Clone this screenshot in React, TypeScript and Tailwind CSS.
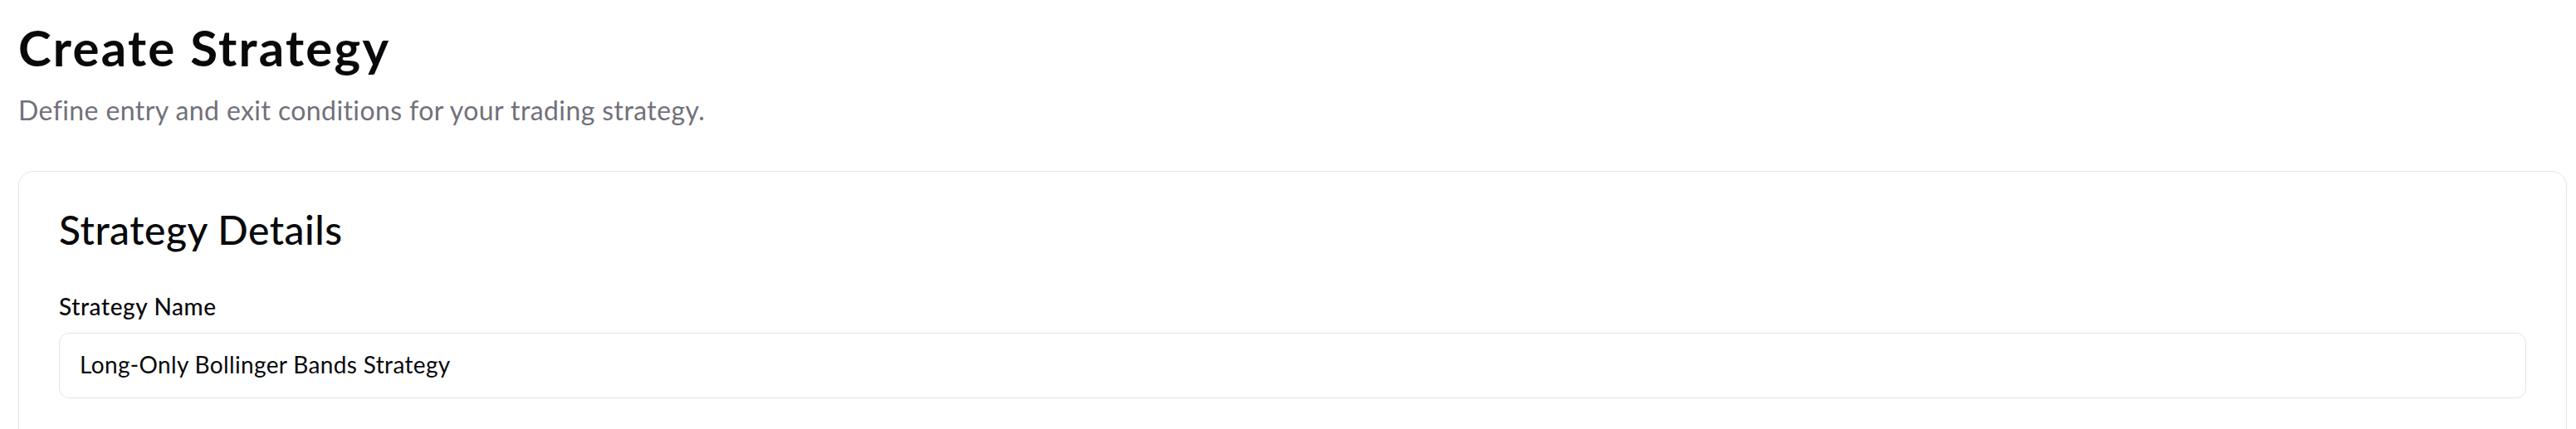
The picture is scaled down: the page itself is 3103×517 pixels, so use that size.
import React from 'react';

const App: React.FC = () => {
  return (
    <div className="min-h-screen bg-white pl-[22px] pr-[11px] pt-[21px] font-['Lato',sans-serif] text-[#09090b]">
      {/* Page header */}
      <h1 className="text-[60px] leading-[72px] font-bold tracking-[2.2px]">Create Strategy</h1>
      <p className="mt-[16px] text-[32px] leading-[48px] tracking-[0.4px] text-[#71717a]">
        Define entry and exit conditions for your trading strategy.
      </p>

      {/* Details card */}
      <div className="mt-[49px] rounded-[18px] border border-[#e4e4e7] bg-white p-[48px] min-h-[400px]">
        <h2 className="text-[48px] leading-[44px] font-medium tracking-[0.5px]">Strategy Details</h2>

        <div className="mt-[56px] flex flex-col gap-[18px]">
          <label className="text-[28px] leading-[28px] font-medium tracking-[0.6px]">Strategy Name</label>
          <input
            readOnly
            defaultValue="Long-Only Bollinger Bands Strategy"
            className="h-[79px] w-full rounded-[12px] border border-[#e4e4e7] bg-white px-[24px] pb-[3px] text-[28px] tracking-[0.35px] text-[#09090b] outline-none"
          />
        </div>
      </div>
    </div>
  );
};

export default App;
